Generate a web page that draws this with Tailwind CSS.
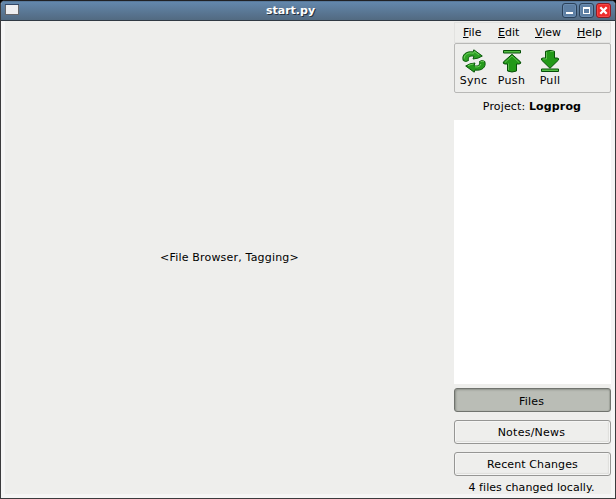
<!DOCTYPE html>
<html lang="en">
<head>
<meta charset="utf-8">
<title>start.py</title>
<script src="https://cdn.jsdelivr.net/npm/@tailwindcss/browser@4"></script>
</head>
<body class="bg-black">
<div class="flex h-[499px] w-[616px] flex-col overflow-hidden rounded-t-[5px] border border-[#3b3b3d] border-t-[#202124] bg-[#f5f5f5] font-['DejaVu_Sans',sans-serif] text-[11px] leading-[14px] text-black">
  <header class="flex h-5 shrink-0 items-start border-b border-[#303943] bg-linear-to-b from-[#6489af] to-[#526a81] pr-1 pl-1 shadow-[inset_0_1px_0_#57789a]">
    <svg class="mt-[3px] h-[11px] w-[14px]" viewBox="0 0 14 11" shape-rendering="crispEdges"><path fill="#666669" d="M0 0h14v11H0z"/><path fill="#334767" d="M0 0h14v1H0z"/><path fill="#eeeef0" d="M1 1h12v9H1z"/></svg>
    <h1 class="flex-1 pt-[3px] text-center font-bold text-white [text-shadow:1px_1px_0_#26323e]">start.py</h1>
    <div class="flex gap-[2px] pt-[2px]">
      <button class="flex size-[15px] items-center justify-center rounded-[3px] border border-[#2b4159] bg-[#5d7fa3] shadow-[inset_0_0_0_1px_#6a8cb0]" aria-label="Minimize"><svg class="size-[13px]" viewBox="0 0 13 13"><path fill="#fff" d="M3 8h7v2H3z"/></svg></button>
      <button class="flex size-[15px] items-center justify-center rounded-[3px] border border-[#2b4159] bg-[#5d7fa3] shadow-[inset_0_0_0_1px_#6a8cb0]" aria-label="Maximize"><svg class="size-[13px]" viewBox="0 0 13 13"><path fill="#fff" fill-rule="evenodd" d="M3 3h7v7H3zM4 5v4h5V5z"/></svg></button>
      <button class="flex size-[15px] items-center justify-center rounded-[3px] border border-[#8e1c24] bg-[#ed2b2b] shadow-[inset_0_0_0_1px_#f64848]" aria-label="Close"><svg class="size-[13px]" viewBox="0 0 13 13"><path stroke="#fff" stroke-width="2.3" d="m3.3 3.3 6.4 6.4m0-6.4L3.3 9.7"/></svg></button>
    </div>
  </header>
  <main class="mx-1 mb-1 flex min-h-0 flex-1 bg-[#eeeeec]">
    <section class="flex w-[449px] items-center justify-center"><p class="tracking-[0.19px]">&lt;File Browser, Tagging&gt;</p></section>
    <aside class="flex w-[157px] flex-col pt-px *:shrink-0">
      <nav class="grid h-[21px] grid-cols-[35px_37px_42px_auto] items-center border border-[#e2e2e0] pt-px pl-2">
        <span><u>F</u>ile</span><span><u>E</u>dit</span><span><u>V</u>iew</span><span><u>H</u>elp</span>
      </nav>
      <div class="flex h-[50px] rounded-[2px] border border-[#b8b8b6] pt-[5px]">
        <div class="flex w-[37px] flex-col items-center gap-px">
          <svg class="size-6" viewBox="0 0 24 24" stroke="#0b5a0b" stroke-linejoin="round">
            <path fill="#2fa326" d="M1.200 11.500C-.5 6 4 1.800 11 3L11.800.8 20.300 7q-4 2.800-9.300 3l1-2.700C7.500 6.300 5.800 8 6.500 11.500q-2.700 2-5.300 0z"/>
            <path fill="none" stroke="#70d05d" d="M2.200 9.500C2.200 5.500 6 3.200 11.700 4.200l.7-1.700 4.700 3.500"/>
            <path fill="#259a1c" d="M22.800 12.500c1.700 5.500-2.800 9.700-9.800 8.500l-.8 2.200L3.700 17q4-2.800 9.300-3l-1 2.700c4.500 1 6.200-.7 5.500-4.200q2.700-2 5.300 0z"/>
            <path fill="none" stroke="#70d05d" d="M6 16.700q3-1.500 5.500-1.700M18.500 12.700q1.700-1 3.400 0M13 17.800c3.500.6 5.500-.7 5.800-2.800"/>
          </svg>
          <span class="tracking-[0.25px]">Sync</span>
        </div>
        <div class="flex w-[39px] flex-col items-center gap-px">
          <svg class="size-6" viewBox="0 0 24 24" stroke="#075008" stroke-linejoin="round">
            <path fill="#55be45" d="M3.500 1.500h17v2.500h-17z"/>
            <path fill="#239919" d="m12 5.300 8.700 7.700q.5 2-1.700 2h-2.500v7q-4.500 2-9 0v-7H5q-2.200 0-1.700-2z"/>
            <path fill="none" stroke="#5fbe4e" d="m5 13.500 7-6.500 7 6.500M8.500 14.500V21"/>
          </svg>
          <span class="tracking-[0.4px]">Push</span>
        </div>
        <div class="flex w-[38px] flex-col items-center gap-px">
          <svg class="size-6" viewBox="0 0 24 24" stroke="#075008" stroke-linejoin="round">
            <path fill="#239919" d="M7.500 2.300q4.500-1.800 9 0V9H19q2.200 0 1.500 2L12 19.300 3.500 11Q2.800 9 5 9h2.500z"/>
            <path fill="none" stroke="#5fbe4e" d="M8.500 3v7H5M12 2.500h3.500"/>
            <path fill="#55be45" d="M3.500 20h17v2.500h-17z"/>
          </svg>
          <span class="tracking-[0.3px]">Pull</span>
        </div>
      </div>
      <p class="flex h-[27px] items-center justify-center pr-px tracking-[0.14px] whitespace-pre">Project: <b>Logprog</b></p>
      <div class="h-[264px] bg-white"></div>
      <div class="mt-1 flex flex-col gap-2">
        <button class="h-6 rounded-[3px] border border-[#70736e] bg-[#babdb6] pt-[3px] pr-[2px] tracking-[0.2px] shadow-[inset_1px_1px_2px_#8e918b,inset_-1px_0_1px_#a0a39c]">Files</button>
        <button class="h-6 rounded-[3px] border border-[#969694] bg-[#eeeeec] pt-px pr-[2px] tracking-[0.25px] shadow-[inset_0_0_0_1px_#f5f5f4,inset_-1px_-1px_1px_1px_#dededc]">Notes/News</button>
        <button class="h-6 rounded-[3px] border border-[#969694] bg-[#eeeeec] pt-px tracking-[0.1px] shadow-[inset_0_0_0_1px_#f5f5f4,inset_-1px_-1px_1px_1px_#dededc]">Recent Changes</button>
      </div>
      <p class="pt-[5px] pr-[2px] text-center tracking-[0.06px] whitespace-nowrap">4 files changed locally.</p>
    </aside>
  </main>
</div>
</body>
</html>
